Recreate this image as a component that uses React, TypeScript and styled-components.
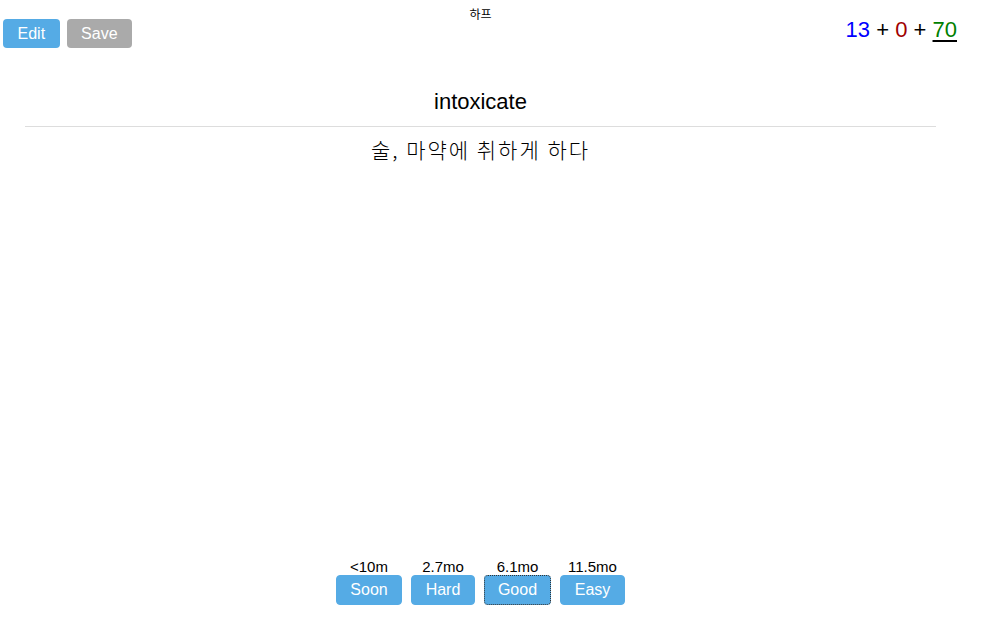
import React from "react";
import styled, { createGlobalStyle } from "styled-components";

const GlobalStyle = createGlobalStyle`
  html, body {
    margin: 0;
    padding: 0;
    background: #fff;
    font-family: "Liberation Sans", Arial, "Noto Sans CJK KR", sans-serif;
    color: #000;
  }
`;

const Page = styled.div`
  width: 961px;
  height: 638px;
  display: flex;
  flex-direction: column;
`;

const TopBar = styled.div`
  display: grid;
  grid-template-columns: 1fr auto 1fr;
  height: 52px;
`;

const LeftGroup = styled.div`
  display: flex;
  gap: 7px;
  padding: 19px 0 0 3px;
`;

const Title = styled.div`
  font-size: 12px;
  padding-top: 5px;
  font-family: "Liberation Sans", "Noto Sans CJK KR", sans-serif;
`;

const Counts = styled.div`
  justify-self: end;
  padding: 17px 4px 0 0;
  font-size: 22px;
`;

const Count = styled.span<{ $color: string; $current?: boolean }>`
  color: ${({ $color }) => $color};
  text-decoration: ${({ $current }) => ($current ? "underline" : "none")};
  text-decoration-color: #000;
  text-underline-offset: 3px;
`;

const ToolButton = styled.button<{ $muted?: boolean }>`
  height: 29px;
  padding: 0 14.5px;
  border: none;
  border-radius: 4px;
  background: ${({ $muted }) => ($muted ? "#aaaaaa" : "#55abe5")};
  color: #fff;
  font-family: "Liberation Sans", Arial, sans-serif;
  font-size: 16px;
  cursor: pointer;
`;

const Card = styled.div`
  flex: 1;
  padding: 0 25px;
  text-align: center;
`;

const Front = styled.div`
  font-size: 22px;
  padding-top: 37px;
  line-height: 26px;
`;

const Divider = styled.hr`
  border: none;
  border-top: 1px solid #dddddd;
  margin: 11px 0 9px;
`;

const Back = styled.div`
  font-size: 21px;
  line-height: 26px;
  letter-spacing: 2px;
  font-weight: 300;
  font-family: "Noto Sans CJK KR", "Liberation Sans", sans-serif;
`;

const AnswerBar = styled.div`
  display: flex;
  justify-content: center;
  gap: 9px;
  padding-bottom: 33px;
`;

const AnswerCell = styled.div`
  display: flex;
  flex-direction: column;
  align-items: center;
`;

const Interval = styled.div`
  font-size: 15px;
  line-height: 16px;
`;

const AnswerButton = styled.button<{ $focused?: boolean }>`
  height: 30px;
  padding: 0;
  border: 1px ${({ $focused }) => ($focused ? "dotted #333" : "solid #55abe5")};
  border-radius: 4px;
  background: #55abe5;
  color: #fff;
  font-family: "Liberation Sans", Arial, sans-serif;
  font-size: 16px;
`;

const answers = [
  { label: "Soon", interval: "<10m", width: 66 },
  { label: "Hard", interval: "2.7mo", width: 64 },
  { label: "Good", interval: "6.1mo", width: 67, focused: true },
  { label: "Easy", interval: "11.5mo", width: 65 },
];

export default function App() {
  return (
    <>
      <GlobalStyle />
      <Page>
        <TopBar>
          <LeftGroup>
            <ToolButton>Edit</ToolButton>
            <ToolButton $muted>Save</ToolButton>
          </LeftGroup>
          <Title>하프</Title>
          <Counts>
            <Count $color="#0000ff">13</Count> +{" "}
            <Count $color="#a00000">0</Count> +{" "}
            <Count $color="#008000" $current>
              70
            </Count>
          </Counts>
        </TopBar>
        <Card>
          <Front>intoxicate</Front>
          <Divider />
          <Back>술, 마약에 취하게 하다</Back>
        </Card>
        <AnswerBar>
          {answers.map((a) => (
            <AnswerCell key={a.label}>
              <Interval>{a.interval}</Interval>
              <AnswerButton $focused={a.focused} style={{ width: a.width }}>
                {a.label}
              </AnswerButton>
            </AnswerCell>
          ))}
        </AnswerBar>
      </Page>
    </>
  );
}
